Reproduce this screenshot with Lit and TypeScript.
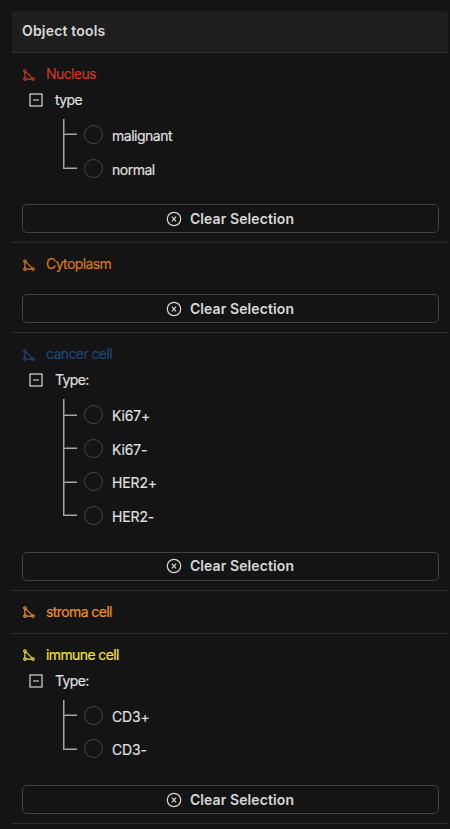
import { LitElement, html, css, svg } from "lit";
import { customElement } from "lit/decorators.js";
import { classMap } from "lit/directives/class-map.js";

interface Tool {
  name: string;
  color: string;
  attribute?: string;
  options?: string[];
  clearable: boolean;
}

const TOOLS: Tool[] = [
  { name: "Nucleus", color: "#cf3620", attribute: "type", options: ["malignant", "normal"], clearable: true },
  { name: "Cytoplasm", color: "#dc7a12", clearable: true },
  { name: "cancer cell", color: "#1b4779", attribute: "Type:", options: ["Ki67+", "Ki67-", "HER2+", "HER2-"], clearable: true },
  { name: "stroma cell", color: "#f29222", clearable: false },
  { name: "immune cell", color: "#f6e52c", attribute: "Type:", options: ["CD3+", "CD3-"], clearable: true },
];

const polygonIcon = svg`<svg class="poly" width="12" height="12" viewBox="0 0 12 12" fill="none" stroke="currentColor" stroke-width="1.15">
  <path d="M1.9 3.1V8.9M3.1 10.1H8.8M2.8 2.8L9.2 9.2"/>
  <circle cx="1.9" cy="1.9" r="1.2"/><circle cx="1.9" cy="10.1" r="1.2"/><circle cx="10" cy="10.1" r="1.2"/>
</svg>`;

const minusIcon = svg`<svg class="minus" width="14" height="14" viewBox="0 0 14 14" fill="none" stroke="currentColor">
  <rect x="1" y="1" width="12" height="12" stroke-width="1.3"/><path d="M4 7H10" stroke-width="1.2"/>
</svg>`;

const clearIcon = svg`<svg width="16" height="16" viewBox="0 0 16 16" fill="none" stroke="currentColor" stroke-width="1.2">
  <circle cx="8" cy="8" r="6.7"/><path d="M5.9 5.6L10.1 10.4M10.1 5.6L5.9 10.4"/>
</svg>`;

@customElement("app-root")
class AppRoot extends LitElement {
  static styles = css`
    :host {
      display: block;
      box-sizing: border-box;
      height: 829px;
      padding: 11px 2px 0 12px;
      overflow: hidden;
      background: #141414;
      color: #e0e0e0;
      font: 14px/20px Inter, "Liberation Sans", sans-serif;
    }
    * { box-sizing: border-box; }
    svg { display: block; flex: none; }
    .header {
      height: 42px;
      padding: 0 10px 1px;
      display: flex;
      align-items: center;
      background: #1e1e1e;
      border-bottom: 1px solid #303030;
      border-radius: 4px 4px 0 0;
      font-weight: 600;
      letter-spacing: 0.18px;
      color: #d8d8d8;
    }
    .section { border-bottom: 1px solid #2e2e2e; padding: 8px 10px 0; }
    .title { display: flex; align-items: center; height: 26px; gap: 11px; padding-left: 1px; }
    .title span { letter-spacing: -0.6px; -webkit-text-stroke: 0.15px currentColor; }
    .poly { margin-top: 1px; }
    .plain { padding-bottom: 8px; }
    .attr { display: flex; align-items: center; height: 26px; padding-left: 7px; gap: 12px; letter-spacing: -0.6px; -webkit-text-stroke: 0.15px currentColor; }
    .minus { color: #c8c8c8; }
    .tree { margin-top: 6px; padding-left: 41px; }
    .option { display: flex; height: 33.5px; }
    .branch { width: 14px; display: flex; flex-direction: column; }
    .elbow { height: 16.4px; border: solid #a6a6a6; border-width: 0 0 1px 1px; box-shadow: inset 1px -1px 0 #5c5c5c; }
    .stem { flex: 1; border-left: 1px solid #a6a6a6; box-shadow: inset 1px 0 0 #5c5c5c; }
    .option:last-child .stem { visibility: hidden; }
    .radio { width: 19px; height: 19px; margin: 6px 9px 0 7px; border: 1px solid #464646; border-radius: 50%; }
    .label { margin-top: 7px; letter-spacing: -0.15px; -webkit-text-stroke: 0.15px currentColor; }
    .label.word { letter-spacing: -0.5px; }
    .clear {
      display: flex;
      align-items: center;
      justify-content: center;
      width: 417px;
      height: 29px;
      margin: 18px 0 9px;
      padding: 0 1px 0 0;
      gap: 8px;
      background: transparent;
      border: 1px solid #414141;
      border-radius: 5px;
      color: #d8d8d8;
      font: 600 14px/20px Inter, "Liberation Sans", sans-serif;
      letter-spacing: 0.1px;
    }
    .tree + .clear { margin-top: 18.4px; }
    .solo .clear { margin-top: 17px; }
  `;

  private renderTool(tool: Tool) {
    const classes = { section: true, plain: !tool.clearable, solo: tool.clearable && !tool.options };
    return html`<section class=${classMap(classes)}>
      <div class="title" style="color:${tool.color}">${polygonIcon}<span>${tool.name}</span></div>
      ${tool.options
        ? html`<div class="attr">${minusIcon}<span>${tool.attribute}</span></div>
            <div class="tree">
              ${tool.options.map(
                (o) => html`<div class="option">
                  <div class="branch"><div class="elbow"></div><div class="stem"></div></div>
                  <div class="radio"></div>
                  <div class=${classMap({ label: true, word: /^[a-z]+$/.test(o) })}>${o}</div>
                </div>`
              )}
            </div>`
        : ""}
      ${tool.clearable ? html`<button class="clear">${clearIcon}<span>Clear Selection</span></button>` : ""}
    </section>`;
  }

  render() {
    return html`<div class="header">Object tools</div>${TOOLS.map((t) => this.renderTool(t))}`;
  }
}
